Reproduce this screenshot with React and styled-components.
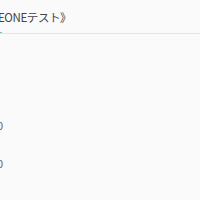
import React from "react";
import styled, { createGlobalStyle } from "styled-components";

const Global = createGlobalStyle`
  html, body { margin: 0; padding: 0; background: #fafafa; overflow: hidden; }
  body { font-family: "Noto Sans CJK JP", "Noto Sans", sans-serif; }
`;

const Page = styled.div`
  width: 200px;
  height: 200px;
  overflow: hidden;
  background: #fafafa;
  display: flex;
  flex-direction: column;
`;

const Header = styled.div`
  height: 33px;
  border-bottom: 1px solid #e4e4e4;
  display: flex;
  align-items: center;
  position: relative;
  overflow: hidden;
`;

const Title = styled.div`
  font-size: 11.5px;
  letter-spacing: -0.4px;
  color: #444;
  white-space: nowrap;
  margin-left: -2px;
`;

const Accent = styled.span`
  position: absolute;
  left: 0;
  bottom: -1px;
  width: 2px;
  height: 2px;
  background: #7fb6c0;
`;

const List = styled.div`
  display: flex;
  flex-direction: column;
  padding-top: 72px;
`;

const Item = styled.div`
  height: 38px;
  display: flex;
  align-items: center;
  font-size: 11px;
  color: #666;
  white-space: nowrap;
  margin-left: ${(p) => p.$shift}px;
`;

export default function App() {
  return (
    <Page>
      <Global />
      <Header>
        <Title>EONEテスト》</Title>
        <Accent />
      </Header>
      <List>
        <Item $shift={-3}>0</Item>
        <Item $shift={-3}>0</Item>
      </List>
    </Page>
  );
}
